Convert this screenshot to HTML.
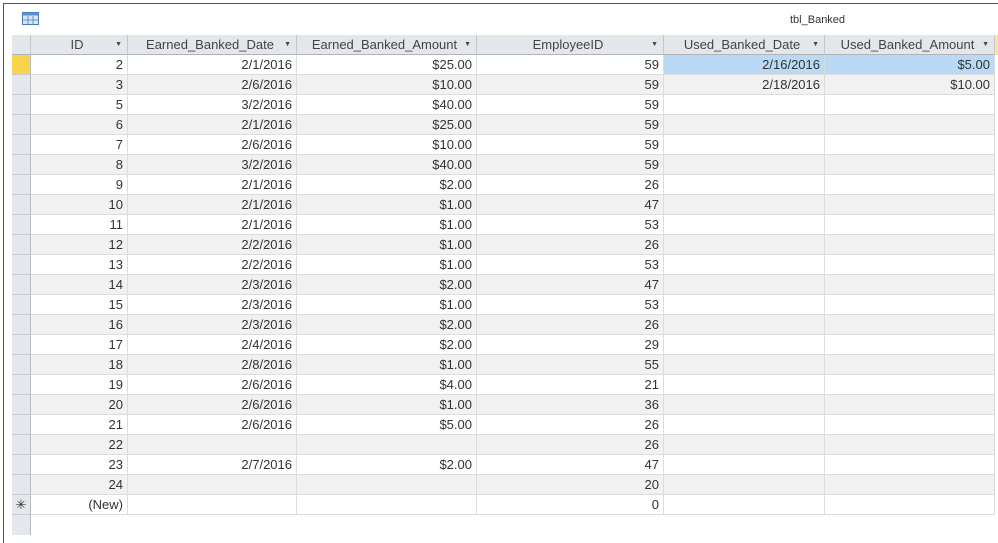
<!DOCTYPE html><html><head><style>
*{margin:0;padding:0;box-sizing:border-box}
body{width:998px;height:531px;background:#fff;position:relative;overflow:hidden;font-family:"Liberation Sans",sans-serif;font-size:13px;color:#333}
.frame{position:absolute;left:3px;top:3px;width:1000px;height:540px;border-left:1px solid #555;border-top:1px solid #555}
.title{position:absolute;left:790px;top:14px;font-size:11px;color:#333}
.grid{position:absolute;left:12px;top:35px}
.row{position:absolute;left:0;height:20px;display:flex}
.c{height:20px;border-right:1px solid #dcdcdc;border-bottom:1px solid #dcdcdc;text-align:right;padding-right:4px;line-height:19px;white-space:nowrap}
.h .c{background:#e3e6ea;border-right:1px solid #c4c8cc;border-bottom:1px solid #b0b4b8;text-align:center;position:relative;color:#444}
.h .c span{position:absolute;right:5px;top:0;font-size:7px}
.sel{width:19px;background:#e4e7eb;border-right:1px solid #b8bcc0;border-bottom:1px solid #c8ccd0;padding:0;text-align:center}
.g .c:not(.sel){background:#f1f1f1}
</style></head><body>
<div class="frame"></div>
<svg style="position:absolute;left:22px;top:12px" width="17" height="13"><rect x=".5" y=".5" width="16" height="12" fill="#d8e6f6" stroke="#4a78b8"/><rect x=".5" y=".5" width="16" height="3" fill="#5b8ed0"/><path d="M6 4v9M11 4v9M1 8h15" stroke="#6a90c8"/></svg>
<div class="title">tbl_Banked</div>
<div class="grid" id="g"></div>
<script>
var w=[19,97,169,180,187,161,170];
var hd=['','ID','Earned_Banked_Date','Earned_Banked_Amount','EmployeeID','Used_Banked_Date','Used_Banked_Amount'];
var d=[[2,'2/1/2016','$25.00',59,'2/16/2016','$5.00'],[3,'2/6/2016','$10.00',59,'2/18/2016','$10.00'],[5,'3/2/2016','$40.00',59],[6,'2/1/2016','$25.00',59],[7,'2/6/2016','$10.00',59],[8,'3/2/2016','$40.00',59],[9,'2/1/2016','$2.00',26],[10,'2/1/2016','$1.00',47],[11,'2/1/2016','$1.00',53],[12,'2/2/2016','$1.00',26],[13,'2/2/2016','$1.00',53],[14,'2/3/2016','$2.00',47],[15,'2/3/2016','$1.00',53],[16,'2/3/2016','$2.00',26],[17,'2/4/2016','$2.00',29],[18,'2/8/2016','$1.00',55],[19,'2/6/2016','$4.00',21],[20,'2/6/2016','$1.00',36],[21,'2/6/2016','$5.00',26],[22,'','',26],[23,'2/7/2016','$2.00',47],[24,'','',20],['(New)','','',0]];
var h='<div class="row h" style="top:0">';
hd.forEach(function(t,i){h+='<div class="c'+(i==0?' sel':'')+'" style="width:'+w[i]+'px">'+t+(i?'<span>▼</span>':'')+'</div>'});
h+='<div class="c" style="width:5px;background:#f5e6a0;border:0"></div></div>';
d.forEach(function(r,k){h+='<div class="row'+(k%2?' g':'')+'" style="top:'+(20+k*20)+'px">';
for(var i=0;i<7;i++){var t=i==0?'':(r[i-1]===undefined?'':r[i-1]);var st='width:'+w[i]+'px;';
if(i==0&&k==0)st+='background:#f8d44c;';if(i==0&&k==22){t='✳';}
if(k==0&&i>=5)st+='background:#b9d9f7;';
h+='<div class="c'+(i==0?' sel':'')+'" style="'+st+'">'+t+'</div>'}
h+='</div>'});
h+='<div class="row" style="top:480px"><div class="c sel" style="width:19px;height:20px;border-bottom:0"></div></div>';
document.getElementById('g').innerHTML=h;
</script>
</body></html>
